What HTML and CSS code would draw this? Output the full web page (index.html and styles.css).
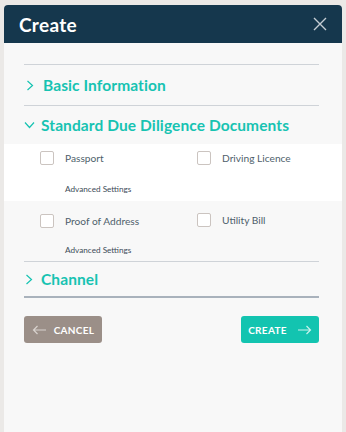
FILE: index.html
```html
<!DOCTYPE html>
<html lang="en">

<head>
  <meta charset="UTF-8">
  <meta name="viewport" content="width=device-width, initial-scale=1.0">
  <title>Create</title>
  <link rel="stylesheet" href="styles.css">
</head>

<body>
  <section class="modal">
    <header class="modal-header">
      <h1>Create</h1>
      <button class="modal-close" aria-label="Close">
        <svg width="14" height="14" viewBox="0 0 14 14"><path d="M1 1L13 13M13 1L1 13" stroke="#c4ccd3" stroke-width="1.4" fill="none"/></svg>
      </button>
    </header>
    <div class="modal-body">
      <div class="panel">
        <div class="panel-title">
          <svg class="chevron" width="8" height="11" viewBox="0 0 8 11"><path d="M1.5 1L6.5 5.5L1.5 10" stroke="#17c3b2" stroke-width="1.2" fill="none"/></svg>
          Basic Information
        </div>
      </div>
      <div class="panel open">
        <div class="panel-title">
          <svg class="chevron" width="11" height="8" viewBox="0 0 11 8"><path d="M1 1.5L5.5 6.5L10 1.5" stroke="#17c3b2" stroke-width="1.2" fill="none"/></svg>
          Standard Due Diligence Documents
        </div>
      </div>
      <div class="docs">
        <div class="doc-row white">
          <div class="doc-cols">
            <label class="doc"><span class="box"></span>Passport</label>
            <label class="doc"><span class="box"></span>Driving Licence</label>
          </div>
          <a class="advanced">Advanced Settings</a>
        </div>
        <div class="doc-row second">
          <div class="doc-cols">
            <label class="doc low"><span class="box"></span>Proof of Address</label>
            <label class="doc"><span class="box"></span>Utility Bill</label>
          </div>
          <a class="advanced">Advanced Settings</a>
        </div>
      </div>
      <div class="panel last">
        <div class="panel-title">
          <svg class="chevron" width="8" height="11" viewBox="0 0 8 11"><path d="M1.5 1L6.5 5.5L1.5 10" stroke="#17c3b2" stroke-width="1.2" fill="none"/></svg>
          Channel
        </div>
      </div>
      <div class="actions">
        <button class="btn btn-cancel">
          <svg width="15" height="10" viewBox="0 0 15 10"><path d="M14 5H1.5M5.5 1L1.5 5L5.5 9" stroke="#d8d2ce" stroke-width="1.2" fill="none"/></svg>
          CANCEL
        </button>
        <button class="btn btn-create">
          CREATE
          <svg width="15" height="10" viewBox="0 0 15 10"><path d="M1 5H13.5M9.5 1L13.5 5L9.5 9" stroke="#c9f2ec" stroke-width="1.2" fill="none"/></svg>
        </button>
      </div>
    </div>
  </section>
</body>

</html>
```

FILE: styles.css
```css
html {
  box-sizing: border-box;
  font-family: 'Lato', 'Noto Sans', sans-serif;
  font-size: 16px;
}

*,
*:after,
*:before {
  box-sizing: inherit;
}

body {
  margin: 0;
  height: 432px;
  overflow: hidden;
  background-color: #ebe9e7;
  padding: 5px 4px 0;
}

.modal {
  height: 100%;
  background-color: #f8f8f8;
  border-radius: 4px 4px 0 0;
  overflow: hidden;
}

.modal-header {
  height: 38px;
  background-color: #15374d;
  display: flex;
  align-items: center;
  justify-content: space-between;
  padding: 0 15px 0 15px;
}

.modal-header h1 {
  margin: 0;
  color: #fff;
  font-size: 19px;
  font-weight: 700;
  letter-spacing: .3px;
}

.modal-close {
  border: 0;
  background: none;
  padding: 0;
  display: flex;
}

.modal-body {
  padding-top: 21px;
}

.panel {
  margin: 0 23px 0 20px;
  border-top: 1px solid #cfd3d8;
}

.panel-title {
  display: flex;
  align-items: center;
  gap: 9px;
  height: 40px;
  color: #17c3b2;
  font-size: 15.5px;
  font-weight: 700;
  letter-spacing: .1px;
  padding-left: 2px;
}

.panel.open .panel-title {
  height: 38px;
  gap: 6px;
  padding-left: 0;
}

.panel.last {
  border-bottom: 2px solid #a9b2bc;
}

.panel.last .panel-title {
  height: 34px;
  gap: 8px;
  padding-left: 1px;
}

.doc-row {
  height: 57px;
  padding: 7px 0 0 36px;
}

.doc-row.white {
  background-color: #fff;
}

.doc-row.second {
  height: 60px;
  padding-top: 11px;
}

.doc-cols {
  display: grid;
  grid-template-columns: 157px 1fr;
  height: 14px;
}

.doc {
  display: flex;
  align-items: center;
  gap: 11px;
  color: #4f5f6c;
  font-size: 10.2px;
}

.doc.low {
  margin-top: 2px;
}

.box {
  width: 14px;
  height: 14px;
  border: 1px solid #cbc4c0;
  border-radius: 2px;
  background-color: #fff;
}

.advanced {
  display: block;
  margin: 19px 0 0 25px;
  color: #3d4c59;
  font-size: 8.2px;
}

.actions {
  display: flex;
  justify-content: space-between;
  margin: 18px 23px 0 20px;
}

.btn {
  width: 78px;
  height: 27px;
  border: 0;
  border-radius: 3px;
  color: #fff;
  font-family: inherit;
  font-size: 10px;
  font-weight: 700;
  display: flex;
  align-items: center;
  justify-content: center;
  gap: 7px;
  letter-spacing: .3px;
}

.btn-cancel {
  background-color: #9b8f88;
}

.btn-create {
  background-color: #13c4b0;
  gap: 10px;
}
```
